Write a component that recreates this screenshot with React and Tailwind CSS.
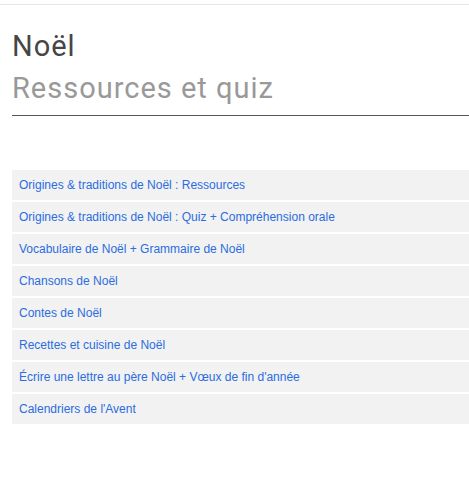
import React from 'react';

const links = [
  'Origines & traditions de Noël : Ressources',
  'Origines & traditions de Noël : Quiz + Compréhension orale',
  'Vocabulaire de Noël + Grammaire de Noël',
  'Chansons de Noël',
  'Contes de Noël',
  'Recettes et cuisine de Noël',
  "Écrire une lettre au père Noël + Vœux de fin d'année",
  "Calendriers de l'Avent",
];

const App = () => {
  return (
    <div className="min-h-[480px] bg-white pt-1">
      <div className="border-t border-[#e6e6e6]" />
      <div className="pl-3">
        <div className="pt-[20px] pb-[6px] border-b border-[#555] tracking-[1px]" style={{ fontFamily: 'Roboto, sans-serif' }}>
          <h1 className="text-[29px] leading-[42px] text-[#464646]">Noël</h1>
          <h2 className="text-[29px] leading-[42px] text-[#999]">Ressources et quiz</h2>
        </div>
        <ul className="mt-[54px] flex flex-col gap-[2px]" style={{ fontFamily: '"Liberation Sans", Arial, sans-serif' }}>
          {links.map(label => (
            <li key={label} className="h-[30px] bg-[#f2f2f2] px-[7px] flex items-center">
              <a href="#" className="text-[12px] text-[#2a6de0]">{label}</a>
            </li>
          ))}
        </ul>
      </div>
    </div>
  );
};

export default App;
